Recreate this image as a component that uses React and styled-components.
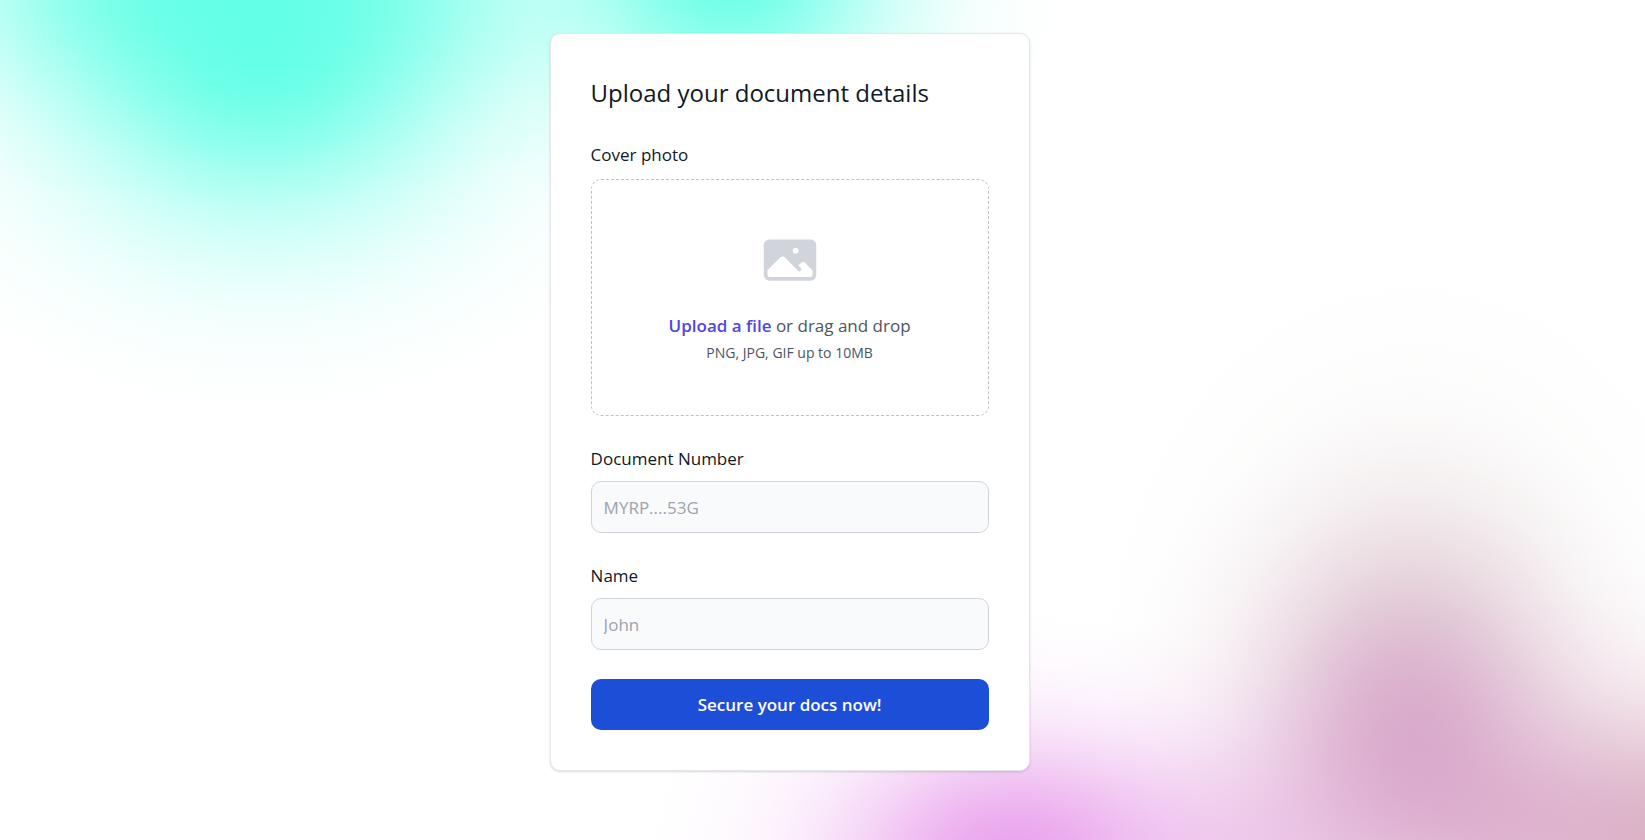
import React from "react";
import styled, { createGlobalStyle } from "styled-components";

// Soft elliptical glow whose opacity falls off along a bell curve.
const glow = (rgb, peak, size, at) => {
  const stops = Array.from({ length: 21 }, (_, i) => {
    const t = i / 20;
    const alpha = i === 20 ? 0 : peak * Math.exp(-4.5 * t * t);
    return `rgba(${rgb}, ${alpha.toFixed(3)}) ${Math.round(t * 100)}%`;
  });
  return `radial-gradient(ellipse ${size} at ${at}, ${stops.join(", ")})`;
};

const backdrop = [
  glow("94, 255, 230", 0.92, "26% 43%", "16% 6%"),
  glow("94, 255, 230", 0.85, "32% 26%", "14% -2%"),
  glow("94, 255, 230", 0.9, "20% 32%", "44.5% -3%"),
  glow("226, 130, 230", 0.72, "22% 29%", "61.5% 102%"),
  glow("206, 126, 188", 0.5, "18% 38%", "85.5% 87%"),
  glow("206, 134, 180", 0.42, "22% 28%", "93% 99%"),
  glow("226, 150, 220", 0.35, "20% 30%", "76% 103%"),
  glow("200, 146, 164", 0.6, "20% 34%", "103% 101%"),
  glow("180, 160, 150", 0.32, "19% 46%", "86% 79%"),
].join(", ");

const GlobalStyle = createGlobalStyle`
  *, *::before, *::after { box-sizing: border-box; }
  body {
    margin: 0;
    color: #111827;
    font-family: "Segoe UI", "Open Sans", "Noto Sans", sans-serif;
  }
`;

const Page = styled.main`
  display: flex;
  justify-content: center;
  align-items: flex-start;
  min-height: 100vh;
  padding: 33px 4% 33px 0;
  background: ${backdrop}, #fff;
`;

const Card = styled.form`
  display: flex;
  flex-direction: column;
  gap: 29px;
  width: 100%;
  max-width: 480px;
  padding: 40px;
  background: #fff;
  border: 1px solid #e5e7eb;
  border-radius: 10px;
  box-shadow: 0 1px 3px rgba(0, 0, 0, 0.1), 0 1px 2px rgba(0, 0, 0, 0.06);
`;

const Title = styled.h1`
  margin: 0;
  font-size: 24px;
  line-height: 38px;
  font-weight: 500;
`;

const Field = styled.div`
  display: flex;
  flex-direction: column;
  gap: ${({ $gap = 8 }) => $gap}px;
`;

const Label = styled.label`
  font-size: 17px;
  line-height: 28px;
  font-weight: 500;
`;

const Input = styled.input`
  width: 100%;
  height: 52px;
  padding: 0 12px;
  background: #f9fafb;
  border: 1px solid #d1d5db;
  border-radius: 10px;
  color: #111827;
  font: inherit;
  font-size: 17px;

  &::placeholder {
    color: #9ca3af;
    opacity: 1;
  }
`;

const DropZone = styled.div`
  display: flex;
  flex-direction: column;
  align-items: center;
  padding: 50px 24px 49px;
  border: 1px dashed #c0c1c4;
  border-radius: 10px;
  color: #4b5563;
  text-align: center;
`;

const PhotoIcon = styled.svg`
  width: 60px;
  height: 60px;
  margin-bottom: 22px;
  fill: #d1d5db;
`;

const DropText = styled.p`
  margin: 0;
  font-size: 17px;
  line-height: 28px;
`;

const FileLink = styled.label`
  color: #4f46e5;
  font-weight: 600;
  cursor: pointer;
`;

const FileInput = styled.input`
  position: absolute;
  width: 1px;
  height: 1px;
  overflow: hidden;
  clip-path: inset(50%);
`;

const Hint = styled.p`
  margin: 0;
  font-size: 14px;
  line-height: 26px;
`;

const Submit = styled.button`
  height: 51px;
  border: 0;
  border-radius: 10px;
  background: #1d4ed8;
  color: #fff;
  font: inherit;
  font-size: 17px;
  font-weight: 600;
  cursor: pointer;
`;

export default function App() {
  return (
    <>
      <GlobalStyle />
      <Page>
        <Card onSubmit={(event) => event.preventDefault()}>
          <Title>Upload your document details</Title>
          <Field $gap={10}>
            <Label htmlFor="cover-photo">Cover photo</Label>
            <DropZone>
              <PhotoIcon viewBox="0 0 24 24" aria-hidden="true">
                <path
                  fillRule="evenodd"
                  clipRule="evenodd"
                  d="M1.5 6a2.25 2.25 0 0 1 2.25-2.25h16.5A2.25 2.25 0 0 1 22.5 6v12a2.25 2.25 0 0 1-2.25 2.25H3.75A2.25 2.25 0 0 1 1.5 18V6ZM3 16.06V18c0 .414.336.75.75.75h16.5A.75.75 0 0 0 21 18v-1.94l-2.69-2.689a1.5 1.5 0 0 0-2.12 0l-.88.879.97.97a.75.75 0 1 1-1.06 1.06l-5.16-5.159a1.5 1.5 0 0 0-2.12 0L3 16.061Zm10.125-7.81a1.125 1.125 0 1 1 2.25 0 1.125 1.125 0 0 1-2.25 0Z"
                />
              </PhotoIcon>
              <DropText>
                <FileLink htmlFor="cover-photo">Upload a file</FileLink> or drag and drop
              </DropText>
              <FileInput id="cover-photo" type="file" accept="image/*" />
              <Hint>PNG, JPG, GIF up to 10MB</Hint>
            </DropZone>
          </Field>
          <Field>
            <Label htmlFor="document-number">Document Number</Label>
            <Input id="document-number" type="text" placeholder="MYRP....53G" />
          </Field>
          <Field>
            <Label htmlFor="name">Name</Label>
            <Input id="name" type="text" placeholder="John" />
          </Field>
          <Submit type="submit">Secure your docs now!</Submit>
        </Card>
      </Page>
    </>
  );
}
